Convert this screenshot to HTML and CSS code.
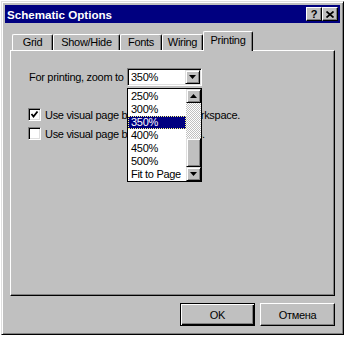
FILE: index.html
```html
<!DOCTYPE html>
<html>
  <head>
    <link rel="stylesheet" href="styles.css">
  </head>
  <body>
    <div class="dialog">
      <div class="titlebar">
        <span class="title">Schematic Options</span>
        <div class="caption-btns">
          <span class="cap-btn cap-help">?</span>
          <span class="cap-btn">
            <svg width="8" height="7" viewBox="0 0 8 7"><path d="M0.5 0.5 L7.5 6.5 M7.5 0.5 L0.5 6.5" stroke="#000" stroke-width="1.7"/></svg>
          </span>
        </div>
      </div>
      <div class="body">
        <div class="tabs">
          <div class="tab tab-grid">Grid</div>
          <div class="tab tab-show">Show/Hide</div>
          <div class="tab tab-fonts">Fonts</div>
          <div class="tab tab-wiring">Wiring</div>
          <div class="tab tab-active">Printing</div>
        </div>
        <div class="panel">
          <div class="zoom-row">
            <span class="zoom-label">For printing, zoom to</span>
            <div class="combo">
              <div class="combo-field">350%</div>
              <div class="combo-btn">
                <svg width="7" height="4" viewBox="0 0 7 4"><path d="M0 0 H7 L3.5 4 Z" fill="#000"/></svg>
              </div>
              <div class="dropdown">
                <div class="list">
                  <div class="item">250%</div>
                  <div class="item">300%</div>
                  <div class="item item-sel">350%</div>
                  <div class="item">400%</div>
                  <div class="item">450%</div>
                  <div class="item">500%</div>
                  <div class="item">Fit to Page</div>
                </div>
                <div class="scrollbar">
                  <div class="sb-btn">
                    <svg width="7" height="4" viewBox="0 0 7 4"><path d="M0 4 H7 L3.5 0 Z" fill="#000"/></svg>
                  </div>
                  <div class="sb-track"></div>
                  <div class="sb-thumb"></div>
                  <div class="sb-btn">
                    <svg width="7" height="4" viewBox="0 0 7 4"><path d="M0 0 H7 L3.5 4 Z" fill="#000"/></svg>
                  </div>
                </div>
              </div>
            </div>
          </div>
          <div class="check-row">
            <span class="checkbox">
              <svg width="9" height="9" viewBox="0 0 9 9"><path d="M1.5 4 L3.5 6.5 L7.5 1.5" stroke="#000" stroke-width="1.8" fill="none"/></svg>
            </span>
            <span>Use visual page borders in the workspace.</span>
          </div>
          <div class="check-row">
            <span class="checkbox"></span>
            <span>Use visual page borders in circuits.</span>
          </div>
        </div>
        <div class="buttons">
          <button class="btn btn-default">OK</button>
          <button class="btn">Отмена</button>
        </div>
      </div>
    </div>
  </body>
</html>
```
FILE: styles.css
```css
/* win95 style dialog */
body {
  margin: 0;
  background-color: #fff;
  font-family: "Liberation Sans", Arial, sans-serif;
  font-size: 11px;
  letter-spacing: -0.3px;
  color: #000;
}
.dialog {
  margin: 1px 0 0 1px;
  width: 343px;
  height: 334px;
  box-sizing: border-box;
  padding: 3px;
  background-color: #c0c0c0;
  border: 1px solid;
  border-color: #dfdfdf #000 #000 #dfdfdf;
  box-shadow: inset 1px 1px #fff, inset -1px -1px #808080;
}
.titlebar {
  height: 18px;
  background-color: #000080;
  color: #fff;
  display: flex;
  align-items: center;
  justify-content: space-between;
  padding: 0 2px 0 2px;
}
.title {
  font-weight: bold;
  font-size: 11.6px;
  letter-spacing: 0;
}
.caption-btns {
  display: flex;
}
.cap-btn {
  width: 16px;
  height: 14px;
  box-sizing: border-box;
  background-color: #c0c0c0;
  border: 1px solid;
  border-color: #fff #000 #000 #fff;
  box-shadow: inset -1px -1px #808080;
  display: flex;
  align-items: center;
  justify-content: center;
  color: #000;
}
.cap-help {
  font-weight: bold;
  font-size: 11px;
  letter-spacing: 0;
}
.body {
  padding: 8px 5px 0 5px;
}
.tabs {
  display: flex;
  align-items: flex-end;
  height: 19px;
  padding-left: 2px;
}
.tab {
  height: 16px;
  box-sizing: border-box;
  border: 1px solid;
  border-bottom: none;
  border-color: #fff #000 #000 #fff;
  border-radius: 2px 2px 0 0;
  box-shadow: inset -1px 0 #808080;
  display: flex;
  align-items: center;
  justify-content: center;
  padding-bottom: 1px;
}
.tab-grid { width: 41px; }
.tab-show { width: 67px; }
.tab-fonts { width: 42px; }
.tab-wiring { width: 41px; }
.tab-active {
  width: 50px;
  height: 20px;
  margin-bottom: -1px;
  position: relative;
  z-index: 1;
  background-color: #c0c0c0;
  padding-bottom: 3px;
}
.panel {
  height: 246px;
  box-sizing: border-box;
  border: 1px solid;
  border-color: #fff #000 #000 #fff;
  box-shadow: inset -1px -1px #808080;
  padding: 17px 0 0 18px;
}
.zoom-row {
  display: flex;
  align-items: center;
}
.zoom-label {
  width: 98px;
}
.combo {
  position: relative;
  width: 75px;
  height: 18px;
  box-sizing: border-box;
  border: 1px solid;
  border-color: #808080 #fff #fff #808080;
  box-shadow: inset 1px 1px #000, inset -1px -1px #dfdfdf;
  background-color: #fff;
  display: flex;
  align-items: center;
  padding: 1px;
}
.combo-field {
  flex: 1;
  padding-left: 2px;
}
.combo-btn {
  width: 15px;
  height: 14px;
  box-sizing: border-box;
  background-color: #c0c0c0;
  border: 1px solid;
  border-color: #dfdfdf #000 #000 #dfdfdf;
  box-shadow: inset 1px 1px #fff, inset -1px -1px #808080;
  display: flex;
  align-items: center;
  justify-content: center;
}
.dropdown {
  position: absolute;
  top: 19px;
  left: -1px;
  width: 75px;
  height: 94px;
  box-sizing: border-box;
  border: 1px solid #000;
  background-color: #fff;
  display: flex;
  z-index: 2;
}
.list {
  flex: 1;
  padding-top: 1px;
}
.item {
  height: 13px;
  line-height: 13px;
  padding-left: 3px;
}
.item-sel {
  background-color: #000080;
  color: #fff;
  outline: 1px dotted #ffff80;
  outline-offset: -1px;
}
.scrollbar {
  width: 15px;
  display: flex;
  flex-direction: column;
}
.sb-btn {
  height: 14px;
  box-sizing: border-box;
  background-color: #c0c0c0;
  border: 1px solid;
  border-color: #dfdfdf #000 #000 #dfdfdf;
  box-shadow: inset 1px 1px #fff, inset -1px -1px #808080;
  display: flex;
  align-items: center;
  justify-content: center;
}
.sb-track {
  height: 35px;
  background-color: #fff;
  background-image: repeating-conic-gradient(#c0c0c0 0% 25%, #fff 0% 50%);
  background-size: 2px 2px;
}
.sb-thumb {
  flex: 1;
  box-sizing: border-box;
  background-color: #c0c0c0;
  border: 1px solid;
  border-color: #dfdfdf #000 #000 #dfdfdf;
  box-shadow: inset 1px 1px #fff, inset -1px -1px #808080;
}
.check-row {
  display: flex;
  align-items: center;
  height: 19px;
  margin-left: -1px;
}
.check-row:first-of-type {
  margin-top: 0;
}
.zoom-row + .check-row {
  margin-top: 19px;
}
.checkbox {
  width: 13px;
  height: 13px;
  box-sizing: border-box;
  background-color: #fff;
  border: 1px solid;
  border-color: #808080 #fff #fff #808080;
  box-shadow: inset 1px 1px #000, inset -1px -1px #dfdfdf;
  display: flex;
  align-items: center;
  justify-content: center;
  margin-right: 4px;
}
.buttons {
  display: flex;
  justify-content: flex-end;
  gap: 5px;
  margin-top: 7px;
}
.btn {
  width: 75px;
  height: 23px;
  box-sizing: border-box;
  background-color: #c0c0c0;
  border: 1px solid;
  border-color: #fff #000 #000 #fff;
  box-shadow: inset -1px -1px #808080;
  font-family: "Liberation Sans", Arial, sans-serif;
  font-size: 11px;
  letter-spacing: -0.3px;
  color: #000;
  padding: 0;
}
.btn-default {
  border: 1px solid #000;
  box-shadow: inset 1px 1px #fff, inset -1px -1px #000, inset -2px -2px #808080;
}
```
